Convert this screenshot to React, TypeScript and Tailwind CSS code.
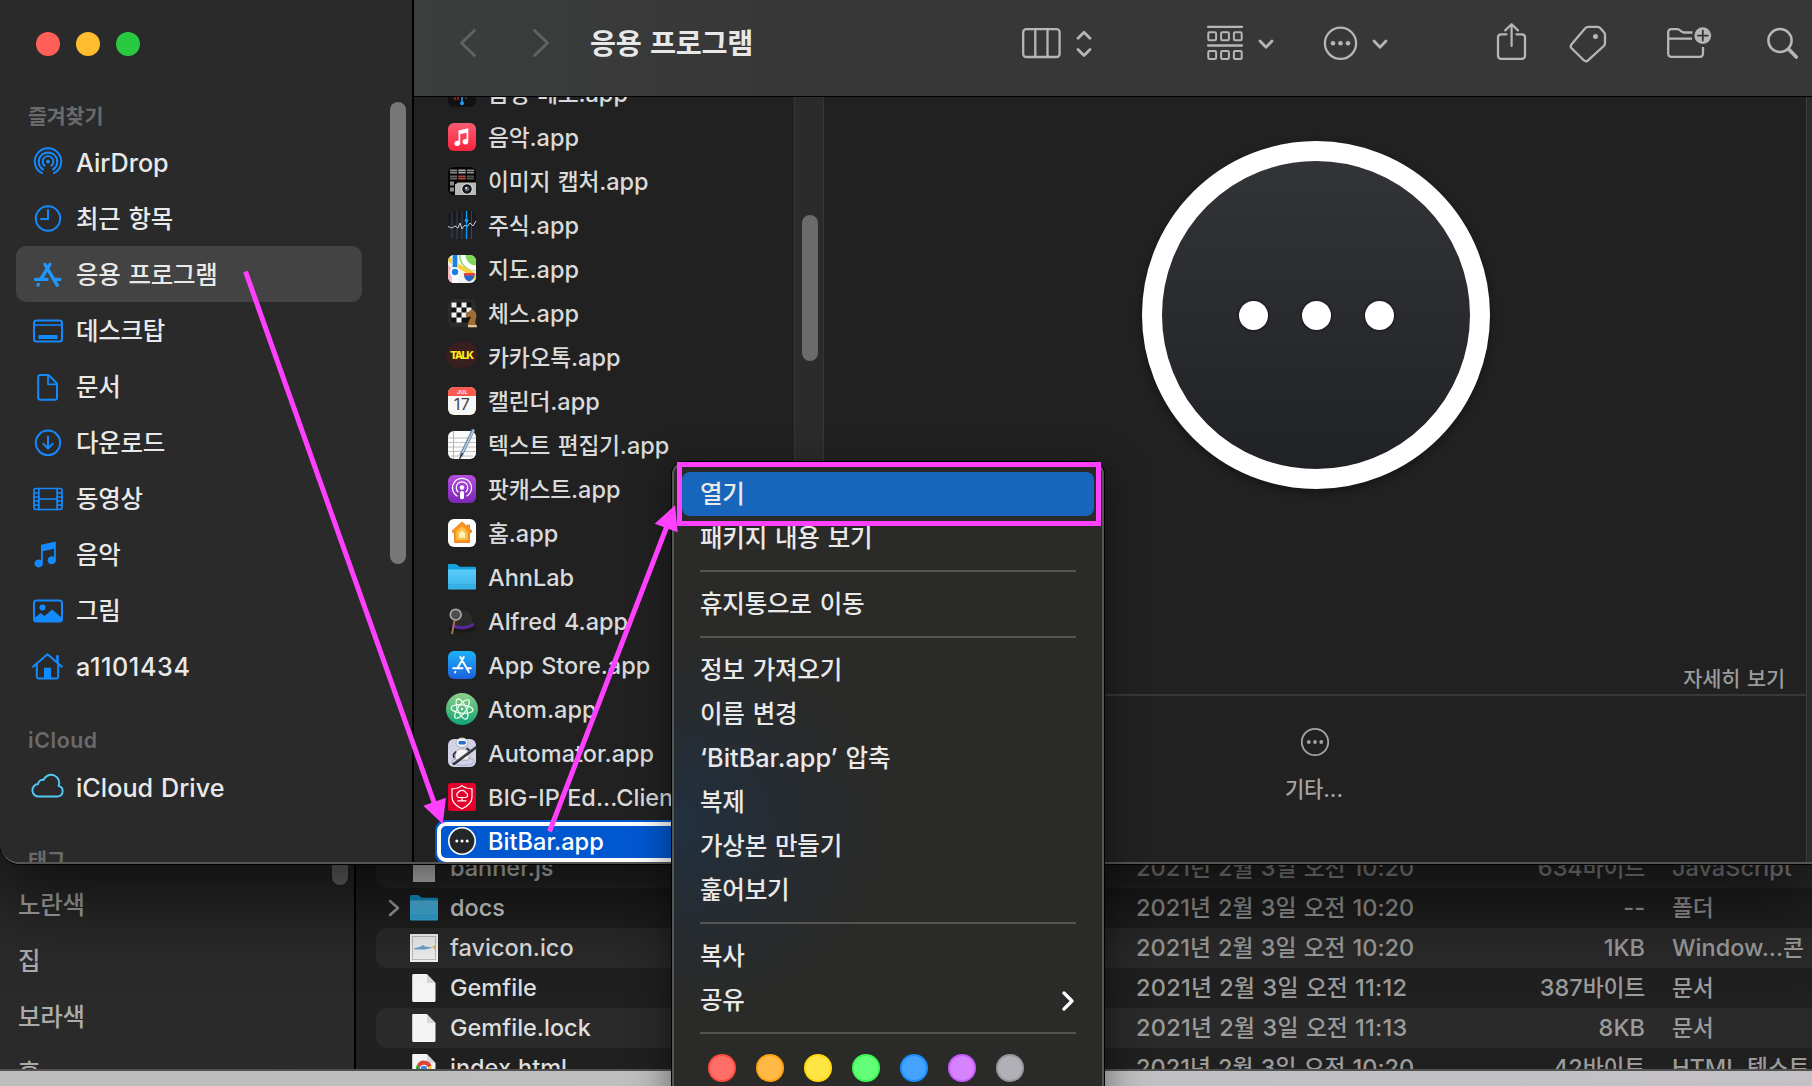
import React from "react";

const HANGUL = /([가-힣]+)/;

/* Mixed Korean / Latin label: Hangul runs are set slightly smaller and tighter. */
function T({ children, className = "" }: { children: string; className?: string }) {
  return (
    <span className={`whitespace-pre [word-spacing:0.05em] ${className}`}>
      {children.split(HANGUL).map((part, i) =>
        HANGUL.test(part) ? (
          <span key={i} className="text-[0.97em] tracking-[-0.01em]">
            {part}
          </span>
        ) : (
          part
        )
      )}
    </span>
  );
}

/* ---------- sidebar icons ---------- */

const sideIcons: Record<string, React.ReactNode> = {
  airdrop: (
    <g strokeWidth="1.9">
      <path d="M12 29.2a13.2 13.2 0 1 1 12 0" />
      <path d="M13 25.6a9.3 9.3 0 1 1 10 0" />
      <path d="M14.6 21.7a5.4 5.4 0 1 1 6.8 0" />
      <circle cx="18" cy="17.6" r="1.9" fill="currentColor" stroke="none" />
    </g>
  ),
  recent: (
    <>
      <circle cx="18" cy="18.5" r="12.2" />
      <path d="M18 10V19H11" />
    </>
  ),
  apps: (
    <g strokeWidth="3.4">
      <path d="M15 8.5 27.2 29.2M19.8 8.5 11 23.2M8.3 28.4l-.3.7" />
      <path d="M5.5 23.4H17M24.5 23.4H29.8" />
    </g>
  ),
  desktop: (
    <>
      <rect x="4" y="8.5" width="28" height="21" rx="2.5" />
      <path d="M4 13H32" strokeWidth="1.6" />
      <rect x="8.3" y="23" width="19.4" height="4" rx="1" fill="currentColor" stroke="none" />
    </>
  ),
  doc: (
    <>
      <path d="M10.5 7H18.5L27 15.5V29.5A2.3 2.3 0 0 1 24.7 31.8H10.5A2.3 2.3 0 0 1 8.2 29.5V9.3A2.3 2.3 0 0 1 10.5 7Z" />
      <path d="M18 7V16.3H27" strokeWidth="1.7" />
    </>
  ),
  download: (
    <>
      <circle cx="18" cy="18.8" r="12.2" />
      <path d="M18 12.8V24.3M13.4 19.9 18 24.5 22.6 19.9" />
    </>
  ),
  movie: (
    <g strokeWidth="1.7">
      <rect x="4" y="8.5" width="28" height="21" rx="2" />
      <path d="M8.8 8.5V29.5M27.2 8.5V29.5M8.8 19H27.2" />
      <path d="M4 13H8.8M4 17H8.8M4 21H8.8M4 25H8.8M27.2 13H32M27.2 17H32M27.2 21H32M27.2 25H32" />
    </g>
  ),
  music: (
    <path
      d="M11 8.8 25.8 5.5V23A4.2 4 0 1 1 24 20.8V12.8L12.8 15.3V26.5A4.2 4 0 1 1 11 24.1Z"
      fill="currentColor"
      stroke="none"
    />
  ),
  picture: (
    <>
      <rect x="4" y="8.5" width="28" height="21" rx="2.5" />
      <circle cx="12.5" cy="15.5" r="3" fill="currentColor" stroke="none" />
      <path d="M4 26.5 10.5 21 14.5 24 22.3 17.5 32 26V29H4Z" fill="currentColor" stroke="none" />
    </>
  ),
  home: (
    <>
      <path d="M3 18.7 17.5 6.2 32 18.7M6.8 16V28.4A2 2 0 0 0 8.8 30.6H26.2A2 2 0 0 0 28.2 28.4V16" />
      <path d="M27.5 8.2V14.2" strokeWidth="2.6" />
      <path d="M14 30.2V19.7H21V30.2Z" fill="currentColor" stroke="none" />
    </>
  ),
  cloud: (
    <path d="M9.2 27.5A6.2 6.2 0 0 1 8 15.1 5.2 5.2 0 0 1 13.6 10.9 8 8 0 0 1 28.6 16.9 5.4 5.4 0 0 1 27.8 27.5Z" />
  ),
};

const favorites: [string, string][] = [
  ["airdrop", "AirDrop"],
  ["recent", "최근 항목"],
  ["apps", "응용 프로그램"],
  ["desktop", "데스크탑"],
  ["doc", "문서"],
  ["download", "다운로드"],
  ["movie", "동영상"],
  ["music", "음악"],
  ["picture", "그림"],
  ["home", "a1101434"],
];

function SideRow({ icon, label, tint }: { icon: string; label: string; tint?: string }) {
  const selected = icon === "apps";
  return (
    <div
      className={`ml-4 flex h-14 w-[346px] shrink-0 items-center gap-[10px] rounded-[10px] pl-[14px] ${
        selected ? "bg-[#434343]" : ""
      }`}
    >
      <svg
        viewBox="0 0 36 36"
        className={`size-9 shrink-0 ${tint ?? (selected ? "text-[#2196ff]" : "text-[#148aff]")}`}
        fill="none"
        stroke="currentColor"
        strokeWidth="2"
        strokeLinecap="round"
        strokeLinejoin="round"
      >
        {sideIcons[icon]}
      </svg>
      <T className={`pt-px text-[25.2px] leading-8 font-medium text-[#e9e9e9] ${icon === "home" ? "tracking-[0.6px]" : ""}`}>
        {label}
      </T>
    </div>
  );
}

/* ---------- application icons (28 x 28) ---------- */

const appIcons: Record<string, React.ReactNode> = {
  voice: (
    <>
      <rect width="28" height="28" rx="6" fill="#121212" />
      <path d="M7 14v7M10 15v6" stroke="#c0282c" strokeWidth="1.2" />
      <path d="M14 4v20" stroke="#1c9cf2" strokeWidth="1.6" />
      <circle cx="14" cy="24.3" r="2" fill="#1c9cf2" />
      <path d="M18 10v10" stroke="#555" strokeWidth="1.2" />
    </>
  ),
  music: (
    <>
      <rect width="28" height="28" rx="6" fill="url(#gMusic)" />
      <path
        d="M10.5 7.4 20.3 5.2V18.6A2.9 2.7 0 1 1 18.6 16.3V9.7L12.2 11.1V20.2A2.9 2.7 0 1 1 10.5 17.9Z"
        fill="#fff"
      />
    </>
  ),
  capture: (
    <>
      <rect width="28" height="28" rx="6" fill="#050505" />
      <g fill="#8b8b8b">
        <rect x="2" y="2.5" width="7" height="4" />
        <rect x="10.3" y="2.5" width="7.4" height="4" fill="#aaa" />
        <rect x="19" y="2.5" width="7" height="4" />
        <rect x="2" y="8.5" width="7" height="4" fill="#666" />
        <rect x="10.3" y="8.5" width="7.4" height="4" fill="#c0413a" />
        <rect x="19" y="8.5" width="7" height="4" fill="#555" />
        <rect x="2" y="14.5" width="4" height="4" />
        <rect x="2" y="20.5" width="4" height="4" />
      </g>
      <path d="M2 4.5H26M2 10.5H26" stroke="#222" strokeWidth=".8" />
      <path d="M7 17.5 10 15.5H28V28H7Z" fill="#b9b9b7" />
      <circle cx="19" cy="22" r="5.3" fill="#181818" stroke="#e8e8e8" strokeWidth="1" />
      <circle cx="19" cy="22" r="2.3" fill="#5a6a80" />
      <circle cx="18.2" cy="21" r=".9" fill="#fff" />
    </>
  ),
  stocks: (
    <>
      <rect width="28" height="28" rx="6" fill="url(#gStocks)" />
      <path d="M4 1v26M9 0v28M14 0v28M23.5 0v28" stroke="#4a4c55" strokeWidth=".8" />
      <path d="M0 15.5 4 17l3-2 3 2 2-5 2 6 3-4 2 2 3-4 3 3 3-5" fill="none" stroke="#c9cbd0" strokeWidth="1" />
      <path d="M18.5 0V28" stroke="#0a9df5" strokeWidth="1.3" />
      <circle cx="18.5" cy="9.5" r="1.8" fill="#12a5ff" />
    </>
  ),
  maps: (
    <>
      <clipPath id="mapClip">
        <rect width="28" height="28" rx="6" />
      </clipPath>
      <g clipPath="url(#mapClip)">
        <rect width="28" height="28" fill="#f4f3ee" />
        <path d="M11 0H28V16A16 16 0 0 1 11 0Z" fill="#7ed957" />
        <path d="M15 0A13 13 0 0 0 28 13" fill="none" stroke="#fff" strokeWidth="5" />
        <path d="M0 6C8 14 20 16 28 26V19C22 14 12 12 0 0Z" fill="#fbcf2f" />
        <path d="M0 10 9 18V28H0Z" fill="#f6b9c4" />
        <rect x="3.8" width="6.4" height="28" fill="#fff" />
        <rect x="4.6" width="4.8" height="14" fill="#1b7fe8" />
        <circle cx="7" cy="17" r="5" fill="#fff" />
        <circle cx="7" cy="17" r="3.2" fill="#1b7fe8" />
        <path d="M16 18H26.5C27 22 25 25.5 21.2 26.5 17.5 25.5 15.5 22 16 18Z" fill="#2668c9" />
        <path d="M16 18H26.5V20.5H16Z" fill="#e5423c" />
      </g>
    </>
  ),
  chess: (
    <>
      <rect width="28" height="28" rx="6" fill="#2b2b2b" />
      <rect x="3.5" y="3.5" width="20" height="20" fill="#141414" />
      <g fill="#f2f2f2">
        <path d="M3.5 3.5h5v5h-5zM13.5 3.5h5v5h-5zM8.5 8.5h5v5h-5zM18.5 8.5h5v5h-5zM3.5 13.5h5v5h-5zM13.5 13.5h5v5h-5zM8.5 18.5h5v5h-5z" />
      </g>
      <path d="M20 26.5C20 21 23 20 22.5 17.5L18.5 18.5 17.5 16 22 11.5 24 10.5C29 12 29.5 18 27 22.5L28.5 28H20Z" fill="#a06c35" />
      <path d="M20 26h8.8v2.3H20z" fill="#e0c49a" />
    </>
  ),
  talk: (
    <>
      <path
        d="M14 -1.2C23 -1.2 30 4.5 30 12S23 24.4 14 24.4C12.5 24.4 11.3 24.2 10 24L4 28.5 5 22.5C.8 20.5-2 16.5-2 12-2 4.5 5-1.2 14-1.2Z"
        fill="#3a1f1f"
      />
      <text x="14" y="15.5" textAnchor="middle" fontSize="10.6" fontWeight="800" fontFamily="Inter" fill="#ffe812" textLength="24">
        TALK
      </text>
    </>
  ),
  calendar: (
    <>
      <rect width="28" height="28" rx="6" fill="#f7f7f6" />
      <path d="M0 9V6A6 6 0 0 1 6 0H22A6 6 0 0 1 28 6V9Z" fill="#fa5a50" />
      <text x="14.3" y="7" textAnchor="middle" fontSize="5.4" fontWeight="600" fontFamily="Inter" fill="#fff" textLength="10.5">
        JUL
      </text>
      <text x="13.7" y="23" textAnchor="middle" fontSize="16" fontFamily="Inter" fill="#444" textLength="16">
        17
      </text>
    </>
  ),
  textedit: (
    <>
      <rect width="28" height="28" rx="6" fill="#fbfbfb" />
      <path d="M0 7H28M0 11.5H28M0 16H28M0 20.5H28M3 25H25" stroke="#b9b9b9" strokeWidth=".9" />
      <path d="M5.5 0V28" stroke="#f09a9a" strokeWidth="1" />
      <path d="M25.5-1.5 12.8 25" stroke="#6f8ea8" strokeWidth="3.4" />
      <path d="M26-1.5 13.8 23" stroke="#c5dcee" strokeWidth="1.1" />
      <path d="M14.5 22 11.5 28" stroke="#333" strokeWidth="1.4" />
    </>
  ),
  podcast: (
    <>
      <rect width="28" height="28" rx="6" fill="url(#gPod)" />
      <g fill="none" stroke="#fff" strokeWidth="1.2">
        <path d="M9.5 21.2A9.5 9.5 0 1 1 18.5 21.2" />
        <path d="M10.4 17.2A5.8 5.8 0 1 1 17.6 17.2" />
      </g>
      <circle cx="14" cy="12.5" r="2.2" fill="#fff" />
      <rect x="12" y="16" width="4" height="8.3" rx="1.8" fill="#fff" />
    </>
  ),
  homeapp: (
    <>
      <rect width="28" height="28" rx="6" fill="#fff" />
      <path d="M14 3 4 12 5 13.7H6.5V23.5H21.5V13.7H23L24 12 21.5 9.6V6H19V7.4Z" fill="#f7931e" stroke="#e8790c" strokeWidth=".8" />
      <path d="M14 7.3 8.3 12.6V21H19.7V12.6Z" fill="#fdbf4c" />
      <path d="M14 11.5 11 14.3V18.8H17V14.3Z" fill="#fff4b8" />
    </>
  ),
  folder: <FolderShape />,
  alfred: (
    <>
      <ellipse cx="14" cy="22" rx="14" ry="3.6" fill="#191919" />
      <path d="M5 21C3 8 9 3 15 3.5S25 8 24.5 20Z" fill="#2c2c2c" />
      <path d="M4.5 16.5C10 20.5 20 20 25.3 15.5L26 19C20 23 10 23 4.3 20.5Z" fill="#58279a" />
      <path d="M6.5 13.5 4 27" stroke="#a87850" strokeWidth="1.8" />
      <circle cx="7.7" cy="7.7" r="5.4" fill="#4e4e4e" stroke="#a9a9a9" strokeWidth="1.7" />
    </>
  ),
  appstore: (
    <>
      <rect width="28" height="28" rx="6" fill="url(#gStore)" />
      <g stroke="#fff" strokeWidth="1.9" strokeLinecap="round">
        <path d="M12.3 6 21 21.2M15.8 6 9.6 17M7.4 20.7 7 21.4M5.2 17.2H14.6M19.5 17.2H22.8" />
      </g>
    </>
  ),
  atom: (
    <>
      <circle cx="14" cy="14" r="16" fill="url(#gAtom)" />
      <g fill="none" stroke="#f0fff4" strokeWidth="1.2">
        <ellipse cx="14" cy="14" rx="11" ry="4.2" transform="rotate(6 14 14)" />
        <ellipse cx="14" cy="14" rx="11" ry="4.2" transform="rotate(66 14 14)" />
        <ellipse cx="14" cy="14" rx="11" ry="4.2" transform="rotate(126 14 14)" />
      </g>
      <circle cx="14" cy="14" r="1.2" fill="#fff" />
    </>
  ),
  automator: (
    <>
      <rect width="28" height="28" rx="6" fill="#d3d3e8" />
      <ellipse cx="15" cy="22.5" rx="11" ry="4" fill="none" stroke="#aaaad2" strokeWidth="1" />
      <path d="M8 21C6 15 8 10 14 10S22 14 20.5 21Z" fill="#f6f6f8" stroke="#8a8a92" strokeWidth=".6" />
      <ellipse cx="14" cy="3.6" rx="6" ry="4.8" fill="#f3f3f5" stroke="#8a8a92" strokeWidth=".6" />
      <rect x="10.4" y="2" width="7.6" height="3.4" rx="1.7" fill="#1d6fd0" />
      <path d="M8 12.5 5.5 15.5 6 19M18.5 9 21.5 11.5" fill="none" stroke="#333" strokeWidth="1.8" />
      <path d="M5 25.5 28.5 8" stroke="#2b2b30" strokeWidth="2.8" />
      <path d="M6 23.9 27 8.3" stroke="#888" strokeWidth=".6" />
    </>
  ),
  bigip: (
    <>
      <rect width="28" height="28" rx="2.5" fill="#e4002b" />
      <path d="M14 2.6C17 5 20 5.8 24 5.8V14C24 19.5 20 23 14 25.8 8 23 4 19.5 4 14V5.8C8 5.8 11 5 14 2.6Z" fill="none" stroke="#fff" strokeWidth="1.2" />
      <path d="M10.5 14.5A2.8 2.8 0 0 1 10.3 9.4 4.4 4.4 0 0 1 18 9.8 2.5 2.5 0 0 1 18 14.5ZM14 14.5V17.3M9.5 17.8H18.5" fill="none" stroke="#fff" strokeWidth="1.2" />
    </>
  ),
  bitbar: (
    <>
      <circle cx="14" cy="14" r="13.2" fill="#252629" stroke="#fff" strokeWidth="1.6" />
      <g fill="#fff">
        <circle cx="8.8" cy="14" r="1.5" />
        <circle cx="14" cy="14" r="1.5" />
        <circle cx="19.2" cy="14" r="1.5" />
      </g>
    </>
  ),
};

function FolderShape() {
  return (
    <>
      <path d="M0 2.3A1.2 1.2 0 0 1 1.2 1H7.6C9 1 10.5 3.7 12.4 3.7H26.6A1.4 1.4 0 0 1 28 5V12H0Z" fill="#16a2dd" />
      <path d="M0 6.6H28V25.2A1.3 1.3 0 0 1 26.7 26.5H1.3A1.3 1.3 0 0 1 0 25.2Z" fill="url(#gFolder)" />
      <path d="M0 21.7H28M0 24H28" stroke="#2da0d4" strokeWidth=".7" />
    </>
  );
}

const apps: [string, string][] = [
  ["voice", "음성 메모.app"],
  ["music", "음악.app"],
  ["capture", "이미지 캡처.app"],
  ["stocks", "주식.app"],
  ["maps", "지도.app"],
  ["chess", "체스.app"],
  ["talk", "카카오톡.app"],
  ["calendar", "캘린더.app"],
  ["textedit", "텍스트 편집기.app"],
  ["podcast", "팟캐스트.app"],
  ["homeapp", "홈.app"],
  ["folder", "AhnLab"],
  ["alfred", "Alfred 4.app"],
  ["appstore", "App Store.app"],
  ["atom", "Atom.app"],
  ["automator", "Automator.app"],
  ["bigip", "BIG-IP Ed...Client.app"],
];

function Gradients() {
  const g: [string, string, string][] = [
    ["gMusic", "#fb5c74", "#fa233b"],
    ["gStocks", "#17181c", "#22242b"],
    ["gPod", "#b54fe0", "#7a27b5"],
    ["gStore", "#1cb3f8", "#1b60e0"],
    ["gAtom", "#8fd08a", "#0fa473"],
    ["gFolder", "#5bcdfb", "#36b2e6"],
  ];
  return (
    <svg className="absolute size-0" aria-hidden>
      <defs>
        {g.map(([id, a, b]) => (
          <linearGradient key={id} id={id} x1="0" y1="0" x2="0" y2="1">
            <stop offset="0" stopColor={a} />
            <stop offset="1" stopColor={b} />
          </linearGradient>
        ))}
      </defs>
    </svg>
  );
}

/* ---------- toolbar ---------- */

function Tool({ x, w, className, children }: { x: number; w: number; className: string; children: React.ReactNode }) {
  return (
    <svg
      viewBox={`${x} 20 ${w} 48`}
      width={w}
      height={48}
      className={`shrink-0 ${className}`}
      fill="none"
      stroke="currentColor"
      strokeWidth="2.3"
      strokeLinecap="round"
      strokeLinejoin="round"
    >
      {children}
    </svg>
  );
}

function Toolbar() {
  return (
    <div className="flex h-24 items-start bg-[linear-gradient(90deg,#3c3e3d_0px,#3a3b3b_150px,#373737_360px)] pt-5 text-[#b6b6b6]">
      <Tool x={459} w={18} className="ml-[45px] text-[#626463]">
        <path d="M474.5 30.5 461.5 43 474.5 55.5" strokeWidth="2.8" />
      </Tool>
      <Tool x={532} w={18} className="ml-[55px] text-[#626463]">
        <path d="M534.5 30.5 547.5 43 534.5 55.5" strokeWidth="2.8" />
      </Tool>
      <div className="ml-10 flex h-[47px] w-[432px] items-center">
        <T className="text-[29.2px] leading-8 font-bold text-[#e8e8e8]">응용 프로그램</T>
      </div>
      <Tool x={1022} w={39} className="">
        <rect x="1023.2" y="29.2" width="36.4" height="27.8" rx="3" />
        <path d="M1035.3 29V57M1047.5 29V57" />
      </Tool>
      <Tool x={1076} w={16} className="ml-[15px]">
        <path d="M1078 38.3 1084 32.3 1090 38.3M1078 49.5 1084 55.5 1090 49.5" strokeWidth="2.8" />
      </Tool>
      <Tool x={1206} w={38} className="ml-[114px]">
        <path d="M1208 26.8H1242M1208 45.5H1242" />
        <g strokeWidth="2">
          <rect x="1208.3" y="32.3" width="7.8" height="8" rx="1.2" />
          <rect x="1221.1" y="32.3" width="7.8" height="8" rx="1.2" />
          <rect x="1233.9" y="32.3" width="7.8" height="8" rx="1.2" />
          <rect x="1208.3" y="51" width="7.8" height="8" rx="1.2" />
          <rect x="1221.1" y="51" width="7.8" height="8" rx="1.2" />
          <rect x="1233.9" y="51" width="7.8" height="8" rx="1.2" />
        </g>
      </Tool>
      <Tool x={1258} w={16} className="ml-[14px]">
        <path d="M1260 41 1266 47.3 1272 41" strokeWidth="2.8" />
      </Tool>
      <Tool x={1323} w={35} className="ml-[49px]">
        <circle cx="1340.5" cy="43.3" r="15.6" />
        <g fill="currentColor" stroke="none">
          <circle cx="1333" cy="43.3" r="2.3" />
          <circle cx="1340.5" cy="43.3" r="2.3" />
          <circle cx="1348" cy="43.3" r="2.3" />
        </g>
      </Tool>
      <Tool x={1372} w={16} className="ml-[14px]">
        <path d="M1374 41 1380 47.3 1386 41" strokeWidth="2.8" />
      </Tool>
      <Tool x={1496} w={31} className="ml-[108px]">
        <path d="M1506.5 34.3H1501A3 3 0 0 0 1498 37.3V55.8A3 3 0 0 0 1501 58.8H1522A3 3 0 0 0 1525 55.8V37.3A3 3 0 0 0 1522 34.3H1516.5" />
        <path d="M1511.6 46V24.6M1505.2 30.4 1511.6 24.2 1518 30.4" strokeWidth="2.2" />
      </Tool>
      <Tool x={1569} w={38} className="ml-[42px]">
        <path d="M1588.2 26.8H1597.5A3.5 3.5 0 0 1 1600.2 28L1604 32.2A3.5 3.5 0 0 1 1605 34.8V43A4.5 4.5 0 0 1 1603.8 46L1588 60.3A3 3 0 0 1 1583.8 60.2L1571.6 48.3A3 3 0 0 1 1571.6 44.2L1585.2 28.2A4 4 0 0 1 1588.2 26.8Z" />
        <circle cx="1595.5" cy="36.6" r="2.5" fill="currentColor" stroke="none" />
      </Tool>
      <Tool x={1667} w={45} className="ml-[60px]">
        <path d="M1692.5 32.5H1684C1681.5 32.5 1680 29.2 1677.5 29.2H1671.2A3 3 0 0 0 1668.2 32.2V53.8A3 3 0 0 0 1671.2 56.8H1700A3 3 0 0 0 1703 53.8V47M1668.5 38.6H1692" strokeLinecap="butt" />
        <circle cx="1702.8" cy="35.6" r="8.4" fill="currentColor" stroke="none" />
        <path d="M1697.8 35.6H1707.8M1702.8 30.6V40.6" stroke="#373737" strokeWidth="1.9" />
      </Tool>
      <Tool x={1766} w={33} className="ml-[54px]">
        <circle cx="1780" cy="40.5" r="11.6" strokeWidth="2.5" />
        <path d="M1788.5 49 1796.3 57" strokeWidth="3.6" />
      </Tool>
    </div>
  );
}

/* ---------- front window ---------- */

function FrontWindow() {
  return (
    <div className="absolute top-0 left-0 flex h-[864px] w-[1830px] overflow-hidden rounded-bl-[20px] border-b-2 border-[#555] bg-[#212121]">
      <aside className="flex w-[412px] shrink-0 bg-[#2a2a2a]">
        <div className="flex w-[390px] flex-col">
          <div className="flex gap-4 pt-8 pl-9">
            <i className="size-6 rounded-full bg-[#ff5f57]" />
            <i className="size-6 rounded-full bg-[#febc2e]" />
            <i className="size-6 rounded-full bg-[#28c840]" />
          </div>
          <div className="mt-[43px] mb-px flex h-[34px] shrink-0 items-center pl-7">
            <T className="text-[21.3px] leading-8 font-semibold text-[#6a6a6a]">즐겨찾기</T>
          </div>
          {favorites.map(([icon, label]) => (
            <SideRow key={label} icon={icon} label={label} />
          ))}
          <div className="mt-[29px] flex h-[34px] shrink-0 items-center pl-7">
            <T className="text-[21.3px] leading-8 font-semibold tracking-[0.6px] text-[#6a6a6a]">iCloud</T>
          </div>
          <div className="pt-[2px]">
            <SideRow icon="cloud" label="iCloud Drive" tint="text-[#52c6f4]" />
          </div>
          <div className="mt-[28px] flex h-[34px] shrink-0 items-center pl-7">
            <T className="text-[21.3px] leading-8 font-semibold text-[#6a6a6a]">태그</T>
          </div>
        </div>
        <div className="mt-[102px] h-[462px] w-4 rounded-full bg-[#777]" />
      </aside>
      <div className="w-[2px] shrink-0 bg-black" />
      <div className="flex min-w-0 flex-1 flex-col">
        <Toolbar />
        <div className="flex min-h-0 flex-1 border-t border-black">
          <div className="flex w-[380px] shrink-0 flex-col overflow-hidden">
            <div className="-mt-[25px] flex flex-col">
              {apps.map(([icon, name]) => (
                <div key={name} className="flex h-11 shrink-0 items-center gap-3 pl-[34px]">
                  <svg viewBox="0 0 28 28" className="-mt-0.5 size-7 shrink-0 overflow-visible">
                    {appIcons[icon]}
                  </svg>
                  <T className="text-[23.5px] leading-8 font-medium text-[#dadada]">{name}</T>
                </div>
              ))}
              <div className="ml-[21px] h-11 w-[400px] rounded-[10px] bg-[#0058d0] p-0.5">
                <div className="flex h-10 items-center gap-3 rounded-[9px] border-4 border-white pl-[7px]">
                  <svg viewBox="0 0 28 28" className="-mt-0.5 size-7 shrink-0 overflow-visible">
                    {appIcons.bitbar}
                  </svg>
                  <T className="text-[23.6px] leading-8 font-medium text-white">BitBar.app</T>
                </div>
              </div>
            </div>
          </div>
          <div className="w-[30px] shrink-0 border-x border-[#363636] bg-[#2b2b2b] pt-[118px] pl-[7px]">
            <div className="h-[146px] w-4 rounded-full bg-[#6b6b6b]" />
          </div>
          <div className="flex w-[982px] shrink-0 flex-col">
            <div className="flex h-[599px] shrink-0 flex-col items-center border-b-2 border-[#373737] pt-11">
              <div className="mx-auto flex size-[348px] shrink-0 translate-x-px items-center justify-center gap-[34px] rounded-full border-[20px] border-white bg-[linear-gradient(#343539,#202125)] bg-origin-border shadow-[0_3px_8px_rgba(0,0,0,0.4)]">
                <i className="size-[29px] rounded-full bg-white shadow-[0_0_3px_#000]" />
                <i className="size-[29px] rounded-full bg-white shadow-[0_0_3px_#000]" />
                <i className="size-[29px] rounded-full bg-white shadow-[0_0_3px_#000]" />
              </div>
              <div className="mt-auto mr-[21px] -mb-px self-end">
                <T className="text-[21.5px] leading-8 font-medium text-[#9b9b9b]">자세히 보기</T>
              </div>
            </div>
            <div className="flex flex-col items-center gap-4 pt-[31px] text-[#a4a4a4]">
              <svg viewBox="0 0 30 30" className="size-[30px]" fill="currentColor">
                <circle cx="15" cy="15" r="13.2" fill="none" stroke="currentColor" strokeWidth="1.8" />
                <circle cx="8.8" cy="15" r="1.9" />
                <circle cx="15" cy="15" r="1.9" />
                <circle cx="21.2" cy="15" r="1.9" />
              </svg>
              <T className="-ml-0.5 text-[21.7px] leading-8 font-medium">기타...</T>
            </div>
          </div>
          <div className="flex-1 border-l border-[#3c3c3c] bg-[#2b2b2b]" />
        </div>
      </div>
    </div>
  );
}

/* ---------- back window ---------- */

const files: [string, string, string, string, string][] = [
  ["js", "banner.js", "2021년 2월 3일 오전 10:20", "634바이트", "JavaScript"],
  ["folder", "docs", "2021년 2월 3일 오전 10:20", "--", "폴더"],
  ["ico", "favicon.ico", "2021년 2월 3일 오전 10:20", "1KB", "Window...콘 이미지"],
  ["file", "Gemfile", "2021년 2월 3일 오전 11:12", "387바이트", "문서"],
  ["file", "Gemfile.lock", "2021년 2월 3일 오전 11:13", "8KB", "문서"],
  ["html", "index.html", "2021년 2월 3일 오전 10:20", "42바이트", "HTML 텍스트"],
];

function FileIcon({ kind }: { kind: string }) {
  return (
    <svg viewBox="0 0 28 28" className="size-7 shrink-0 overflow-visible">
      {kind === "folder" && <FolderShape />}
      {kind === "js" && <rect x="3" width="22" height="28" fill="#e4e4e4" />}
      {kind === "ico" && (
        <>
          <rect width="28" height="28" fill="#f6f6f6" />
          <rect x="2.5" y="2.5" width="23" height="23" fill="#f1f1f1" stroke="#bdbdbd" />
          <path d="M3.5 14.5 11 12.5 13 11 15 12.5 23 13.5 15 15.5H5Z" fill="#6ca3cc" />
          <path d="M22.5 12.5 25 11.5V16Z" fill="#e3b23c" />
        </>
      )}
      {(kind === "file" || kind === "html") && (
        <>
          <path d="M3.5 0H16.5L25.5 9V26.5A1.5 1.5 0 0 1 24 28H3.7A1.5 1.5 0 0 1 2.2 26.5V1.5A1.3 1.3 0 0 1 3.5 0Z" fill="#f4f4f4" />
          <path d="M17 0 25.5 9H18.3A1.3 1.3 0 0 1 17 7.7Z" fill="#d6d6d6" />
        </>
      )}
      {kind === "html" && (
        <>
          <circle cx="14" cy="15" r="8" fill="#f8c634" />
          <path d="M14 15 7 11A8 8 0 0 1 21.5 11.5Z" fill="#dd4639" />
          <path d="M14 15 7 11A8 8 0 0 0 12 22.5Z" fill="#2d9f52" />
          <circle cx="14" cy="15" r="4.2" fill="#fff" />
          <circle cx="14" cy="15" r="3.2" fill="#3f80e8" />
        </>
      )}
    </svg>
  );
}

function BackWindow() {
  return (
    <div className="absolute top-0 left-0 flex h-[1071px] w-[1830px] overflow-hidden border-b-2 border-[#505050] bg-[#202020]">
      <div className="flex w-[354px] shrink-0 justify-between bg-[#2a2a2a] pt-[820px] pr-[6px]">
        <div className="flex flex-col pt-14 pl-[18px]">
          {["노란색", "집", "보라색", "홈"].map((t) => (
            <div key={t} className="flex h-14 shrink-0 items-center">
              <T className="pt-px text-[25.2px] leading-8 font-medium text-[#acacac]">{t}</T>
            </div>
          ))}
        </div>
        <div className="h-[65px] w-4 rounded-full bg-[#777]" />
      </div>
      <div className="w-[2px] shrink-0 bg-black" />
      <div className="flex flex-1 flex-col pt-[848px] pl-5">
        {files.map(([kind, name, date, size, type], i) => (
          <div
            key={name}
            className={`flex h-10 shrink-0 items-center rounded-l-[10px] text-[23.5px] leading-8 font-medium ${
              i % 2 === 0 && i < 5 ? "bg-[#2a2a2a]" : ""
            }`}
          >
            <div className="flex w-[34px] shrink-0 justify-center pl-[1px]">
              {kind === "folder" && (
                <svg viewBox="0 0 12 18" className="h-[18px] w-3" fill="none" stroke="#a8a8a8" strokeWidth="2.5" strokeLinecap="round" strokeLinejoin="round">
                  <path d="M2 2 10 9 2 16" />
                </svg>
              )}
            </div>
            <FileIcon kind={kind} />
            <T className="w-[686px] shrink-0 pl-3 text-[#dedede]">{name}</T>
            <T className={`w-[301px] shrink-0 pl-3 text-[#9b9b9b] ${date.includes("11:") ? "tracking-[0.25px]" : ""}`}>
              {date}
            </T>
            <T className="w-[220px] shrink-0 text-right text-[#9b9b9b]">{size}</T>
            <T className="shrink-0 pl-[27px] text-[#9b9b9b]">{type}</T>
          </div>
        ))}
      </div>
    </div>
  );
}

/* ---------- context menu ---------- */

const tags: [string, string][] = [
  ["bg-[#ff6e67]", "border-[#ff4b41]"],
  ["bg-[#ffb944]", "border-[#ffa215]"],
  ["bg-[#ffe544]", "border-[#ffda10]"],
  ["bg-[#63ff78]", "border-[#3ef757]"],
  ["bg-[#43a3ff]", "border-[#1a8cff]"],
  ["bg-[#d782ff]", "border-[#c65cff]"],
  ["bg-[#b1b0b6]", "border-[#98979d]"],
];

function Item({ label, arrow, on }: { label: string; arrow?: boolean; on?: boolean }) {
  return (
    <div className={`mx-2 flex h-11 shrink-0 items-center justify-between rounded-[8px] pl-[18px] pr-5 ${on ? "bg-[#1866bb]" : ""}`}>
      <T className="text-[25.3px] leading-8 font-medium text-[#e9e9e9]">{label}</T>
      {arrow && (
        <svg viewBox="0 0 12 20" className="mt-0.5 h-5 w-3" fill="none" stroke="#fff" strokeWidth="3.2" strokeLinecap="round" strokeLinejoin="round">
          <path d="M2 2 10 10 2 18" />
        </svg>
      )}
    </div>
  );
}

function Rule() {
  return <div className="mx-[26px] my-[10px] h-[2px] shrink-0 bg-[#525250]" />;
}

function ContextMenu() {
  return (
    <div className="absolute top-[462px] left-[672px] flex h-[660px] w-[432px] flex-col rounded-[12px] border-2 border-[#565654] bg-[#2a2a28] bg-[radial-gradient(ellipse_210px_190px_at_0px_360px,#22303f_0%,#262c32_50%,#2a2a28_100%)] pt-2 shadow-[0_0_0_1px_#000,0_12px_40px_rgba(0,0,0,0.5)]">
      <Item label="열기" on />
      <Item label="패키지 내용 보기" />
      <Rule />
      <Item label="휴지통으로 이동" />
      <Rule />
      <Item label="정보 가져오기" />
      <Item label="이름 변경" />
      <Item label="‘BitBar.app’ 압축" />
      <Item label="복제" />
      <Item label="가상본 만들기" />
      <Item label="훑어보기" />
      <Rule />
      <Item label="복사" />
      <Item label="공유" arrow />
      <Rule />
      <div className="flex gap-5 pt-[10px] pl-[34px]">
        {tags.map(([fill, edge]) => (
          <i key={fill} className={`size-7 rounded-full border-2 ${fill} ${edge}`} />
        ))}
      </div>
    </div>
  );
}

/* Pink callouts drawn over the windows. */
function Annotations() {
  return (
    <>
      <div className="absolute top-[462px] left-[677px] h-16 w-[424px] border-[5px] border-[#ff40ff]" />
      <svg className="absolute top-0 left-0 h-[1086px] w-[1812px]" viewBox="0 0 1812 1086" fill="#ff40ff">
        <path d="M245.5 271.5 436 808" stroke="#ff40ff" strokeWidth="5" />
        <path d="M442.7 824 423.3 805.7 446 797.7Z" />
        <path d="M549.5 831.5 667 526" stroke="#ff40ff" strokeWidth="5" />
        <path d="M675 505.3 654.7 523.7 677.7 532.3Z" />
      </svg>
    </>
  );
}

export default function App() {
  return (
    <div className="relative h-[1086px] w-[1812px] overflow-hidden bg-[linear-gradient(90deg,#bdbdbd,#c3c1c4)] [font-family:Inter,'Noto_Sans_CJK_KR',sans-serif]">
      <Gradients />
      <BackWindow />
      <div className="absolute top-0 left-0 h-[864px] w-[1812px] rounded-bl-[20px] shadow-[0_24px_80px_10px_rgba(0,0,0,0.65),0_0_0_1px_#000]" />
      <FrontWindow />
      <ContextMenu />
      <Annotations />
    </div>
  );
}
